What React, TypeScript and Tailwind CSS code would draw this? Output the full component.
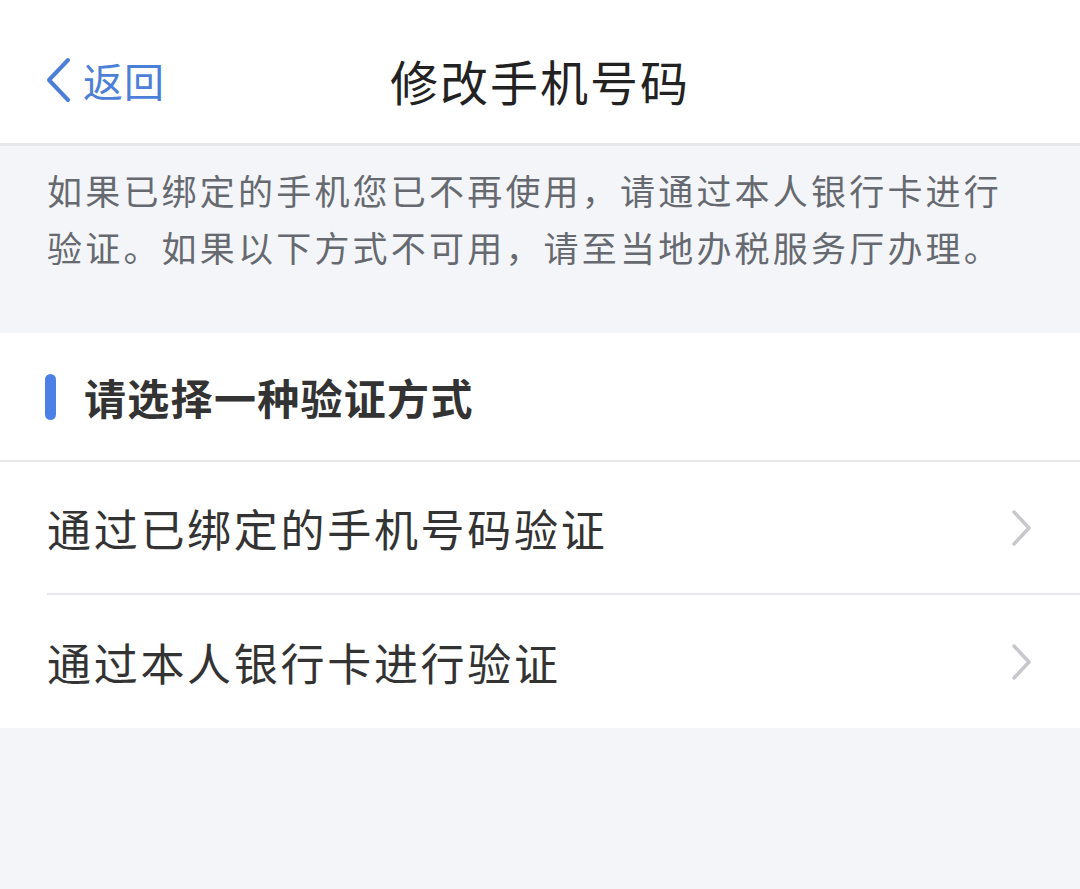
import React from 'react';

const font = { fontFamily: '"Noto Sans CJK SC", "Noto Sans", sans-serif' };

const Chevron: React.FC = () => (
  <svg width="22" height="38" viewBox="0 0 22 38" fill="none" className="shrink-0">
    <path d="M3 3 L18 19 L3 35" stroke="#c7c8cc" strokeWidth="3.5" strokeLinecap="round" strokeLinejoin="round" />
  </svg>
);

const options = ['通过已绑定的手机号码验证', '通过本人银行卡进行验证'];

export default function App() {
  return (
    <div className="w-[1080px] h-[889px] bg-[#f4f5f9] flex flex-col overflow-hidden" style={font}>
      {/* nav bar */}
      <div className="h-[146px] pt-[16px] bg-white border-b-[3px] border-[#e6e7eb] flex items-center relative shrink-0">
        <div className="flex items-center pl-[45px] gap-[11px] text-[#4b7fd8]">
          <svg width="27" height="46" viewBox="0 0 27 46" fill="none">
            <path d="M23 3 L4 23 L23 43" stroke="#4b7fd8" strokeWidth="4" strokeLinecap="round" strokeLinejoin="round" />
          </svg>
          <span className="text-[40px] leading-none tracking-[1px]">返回</span>
        </div>
        <h1 className="absolute left-0 right-0 text-center text-[48px] leading-none tracking-[2px] text-[#222] font-normal">
          修改手机号码
        </h1>
      </div>

      {/* info */}
      <div className="h-[187px] pl-[47px] pr-[20px] pt-[15px] shrink-0">
        <p className="text-[35px] leading-[57px] tracking-[3.2px] text-[#666a70] whitespace-nowrap">
          如果已绑定的手机您已不再使用，请通过本人银行卡进行
          <br />
          验证。如果以下方式不可用，请至当地办税服务厅办理。
        </p>
      </div>

      {/* options */}
      <div className="bg-white shrink-0">
        <div className="h-[129px] flex items-center pl-[45px] gap-[28px] border-b-2 border-[#e8e9ec]">
          <div className="w-[11px] h-[46px] rounded-full bg-[#4d80e6]" />
          <span className="text-[42px] leading-none font-bold tracking-[1.3px] text-[#333]">请选择一种验证方式</span>
        </div>
        {options.map((o, i) => (
          <div key={o} className="pl-[47px]">
            <div className={`h-[133px] flex items-center justify-between pr-[47px] ${i === 0 ? 'border-b-2 border-[#e8e9ec]' : ''}`}>
              <span className="text-[44px] leading-none tracking-[2.7px] text-[#333]">{o}</span>
              <Chevron />
            </div>
          </div>
        ))}
      </div>
    </div>
  );
}
